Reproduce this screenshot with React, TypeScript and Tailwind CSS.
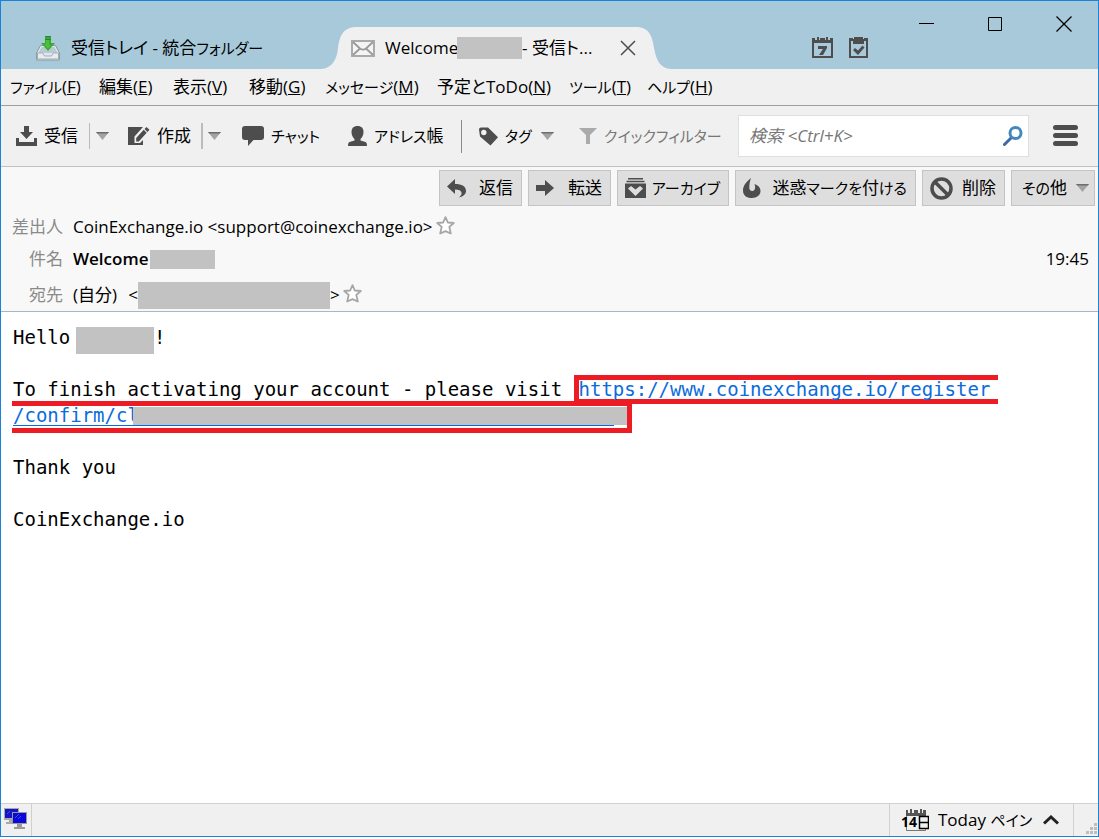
import { ReactNode } from "react";
import clsx from "clsx";

const MENUS = [
  { kana: "ファイル", accessKey: "F", width: "w-[89px]" },
  { label: "編集", accessKey: "E", width: "w-[74px]" },
  { label: "表示", accessKey: "V", width: "w-[76px]" },
  { label: "移動", accessKey: "G", width: "w-[76px]" },
  { kana: "メッセージ", accessKey: "M", width: "w-[112px]" },
  { label: "予定とToDo", accessKey: "N", width: "w-[132px]" },
  { kana: "ツール", accessKey: "T", width: "w-[78px]" },
  { kana: "ヘルプ", accessKey: "H", width: "w-[78px]" },
];

// Kana is set a little smaller than kanji, as in the compact system UI fonts.
function Kana({ children }: { children: ReactNode }) {
  return <span className="text-[15px]">{children}</span>;
}

function Redacted({ className }: { className: string }) {
  return <span className={clsx("shrink-0 bg-[#c2c2c2]", className)} />;
}

function Caret() {
  return (
    <svg width="13" height="8" viewBox="0 0 13 8" className="shrink-0" aria-hidden="true">
      <path d="M0 0h13L6.5 8z" fill="#a3a3a3" />
      <path d="M0 0h13l-1.2 1.5H1.2z" fill="#6d6d6d" />
    </svg>
  );
}

function InboxIcon() {
  return (
    <svg width="24" height="25" viewBox="0 0 24 25" className="shrink-0" aria-hidden="true">
      <path d="M4.5 9.5h15L23.5 17v7H.5v-7z" fill="#dde7ec" stroke="#8e9aa1" />
      <path d="M5.500 11h13l3 6H2.500z" fill="#b9cad4" />
      <path d="M1.500 17h5l2 3h7l2-3h5v6h-21z" fill="#e6ecef" stroke="#a3afb6" />
      <path d="M9 0h6v7h4l-7 8-7-8h4z" fill="#36ad32" />
      <path d="M10 4h3v5h2l-3 4-4-5h2z" fill="#4fbd45" />
      <path d="M9 .5h6M9 3.500h6" stroke="#278a28" />
    </svg>
  );
}

function EnvelopeIcon() {
  return (
    <svg width="24" height="17" viewBox="0 0 24 17" fill="none" className="shrink-0" aria-hidden="true">
      <rect x="1" y="1" width="22" height="15" fill="#f4f4f4" stroke="#aaa" strokeWidth="2" />
      <path d="M2 2l7 6.500c2 1.500 4 1.500 6 0L22 2M2 15l7-6.500M22 15l-7-6.500" stroke="#999" strokeWidth="1.800" />
    </svg>
  );
}

function CalendarIcon() {
  return (
    <svg width="21" height="21" viewBox="0 0 21 21" aria-hidden="true">
      <path d="M0 1h3v2h2V0h2v3h1V1h5v2h1V0h2v3h2V1h3v20H0z" fill="#4d4d4d" />
      <path d="M2 6h17v13H2z" fill="#a7c9da" />
      <path d="M6 9h9v2l-4 7H7l4-6H6z" fill="#4d4d4d" />
    </svg>
  );
}

function TasksIcon() {
  return (
    <svg width="19" height="21" viewBox="0 0 19 21" aria-hidden="true">
      <path d="M0 1h4v1h1V0h9v2h1V1h4v20H0z" fill="#4d4d4d" />
      <path d="M2 4h2v3h11V4h2v15H2z" fill="#a7c9da" />
      <path d="M5 0h9v6H5z" fill="#4d4d4d" />
      <path d="M4 13l2-2 3 2.500 4.500-5 2 2-6.500 7.500z" fill="#4d4d4d" />
    </svg>
  );
}

function ReceiveIcon() {
  return (
    <svg width="21" height="20" viewBox="0 0 21 20" fill="#4d4d4d" className="shrink-0" aria-hidden="true">
      <path d="M8 0h5v6h4l-6.500 7L4 6h4zM0 12h3v4h15v-4h3v8H0z" />
    </svg>
  );
}

function ComposeIcon() {
  return (
    <svg width="22" height="20" viewBox="0 0 22 20" fill="#4d4d4d" className="shrink-0" aria-hidden="true">
      <path d="M0 1h15L6.500 10.500V17H12l3-3v5H0z" />
      <path d="M18.500 1l3 2.800-2 2.100-3-2.900zM15.700 3.800l3 2.900-7.900 8.800H8.200V12z" />
    </svg>
  );
}

function ChatIcon() {
  return (
    <svg width="22" height="20" viewBox="0 0 22 20" fill="#4d4d4d" className="shrink-0" aria-hidden="true">
      <path d="M3 0h16a3 3 0 013 3v8a3 3 0 01-3 3h-7.500L6 20v-6H3a3 3 0 01-3-3V3a3 3 0 013-3z" />
    </svg>
  );
}

function PersonIcon() {
  return (
    <svg width="19" height="20" viewBox="0 0 19 20" fill="#4d4d4d" className="shrink-0" aria-hidden="true">
      <path d="M9.500 0c4 0 6 2.200 6 6 0 3-1.300 5.500-3 7v1.500l5 1.500c1 .4 1.500 1.500 1.500 4H0c0-2.500.5-3.600 1.500-4l5-1.500V13c-1.700-1.500-3-4-3-7 0-3.800 2-6 6-6z" />
    </svg>
  );
}

function TagIcon() {
  return (
    <svg width="19" height="19" viewBox="0 0 19 19" className="shrink-0" aria-hidden="true">
      <path
        d="M0 2.500A2 2 0 012 .5h7l10 9.800-7.500 8.200L1 9.500zM4.800 2.800a2.700 2.700 0 100 5.400 2.700 2.700 0 000-5.400z"
        fill="#4d4d4d"
        fillRule="evenodd"
      />
    </svg>
  );
}

function FunnelIcon() {
  return (
    <svg width="18" height="16" viewBox="0 0 18 16" className="shrink-0" aria-hidden="true">
      <path d="M0 0h18l-7 7v9H7V7z" fill="#aaa" />
    </svg>
  );
}

function SearchIcon() {
  return (
    <svg width="20" height="20" viewBox="0 0 20 20" fill="none" className="shrink-0" aria-hidden="true">
      <path d="M1.500 18.500L8 12" stroke="#3d6aa3" strokeWidth="3" strokeLinecap="round" />
      <circle cx="12.500" cy="7" r="5.500" stroke="#4387bd" strokeWidth="3" />
    </svg>
  );
}

function ReplyIcon() {
  return (
    <svg width="20" height="19" viewBox="0 0 20 19" fill="#4d4d4d" className="shrink-0" aria-hidden="true">
      <path d="M0 7.500L8 0v5c7 0 11 2.500 11 7 0 3-2.500 5.500-7 6.500 2.300-2 2.800-3.500 2.500-5C14 11.500 12 10.500 8 10.500V15z" />
    </svg>
  );
}

function ForwardIcon() {
  return (
    <svg width="19" height="16" viewBox="0 0 19 16" fill="#4d4d4d" className="shrink-0" aria-hidden="true">
      <path d="M0 5h9V0l9 8-9 8v-5H0z" />
    </svg>
  );
}

function ArchiveIcon() {
  return (
    <svg width="21" height="20" viewBox="0 0 21 20" className="shrink-0" aria-hidden="true">
      <path d="M3 0h15v1.500H3zM1.500 2.700h18v1.500h-18zM0 5.500h21V20H0z" fill="#4d4d4d" />
      <path d="M3 10.500L6 8l4.500 3.500L15 8l3 2.500-7.500 7.500z" fill="#dedede" />
    </svg>
  );
}

function JunkIcon() {
  return (
    <svg width="18" height="21" viewBox="0 0 18 21" fill="#4d4d4d" className="shrink-0" aria-hidden="true">
      <path d="M8 0C6.500 4 6.500 6 6.300 9c-.2 2.500 1 4 3 4s3.900-2.200 2.200-7c4 1.200 6 4 6 7 0 4-3.500 7-8.700 7S0 17.500 0 12.500C0 8 3 4 8 0z" />
    </svg>
  );
}

function DeleteIcon() {
  return (
    <svg width="23" height="23" viewBox="0 0 23 23" fill="none" stroke="#4d4d4d" strokeWidth="3.500" className="shrink-0" aria-hidden="true">
      <circle cx="11.500" cy="11.500" r="9.500" />
      <path d="M5 5l13 13" />
    </svg>
  );
}

function StarButton() {
  return (
    <button type="button" aria-label="スターを付ける" className="pb-1">
      <svg width="19" height="19" viewBox="0 0 19 19" aria-hidden="true">
        <path
          d="M9.500 1.200l2.300 5.300 6 .5-4.500 3.900 1.500 6.600-5.300-2.400-5.300 2.400 1.500-6.600L1.200 7l6-.5z"
          fill="#fff"
          stroke="#a6a6a6"
          strokeWidth="1.800"
          strokeLinejoin="round"
        />
      </svg>
    </button>
  );
}

function NetworkIcon() {
  return (
    <svg width="24" height="22" viewBox="0 0 24 22" aria-hidden="true">
      <path d="M0 0h15v12H0zM5 12h5v2h2v2H2v-2h3z" fill="#a8a8a8" />
      <path d="M1 1h13v9H1z" fill="#1515c8" />
      <path d="M8 4h15v12H8zM13 16h5v3h3v2H10v-2h3z" fill="#999" />
      <path d="M9 5h13v10H9z" fill="#0808dc" />
      <path d="M3 6l3-3M11 10l4-4M14 11l3-3" stroke="#4353d8" />
    </svg>
  );
}

function TodayIcon() {
  return (
    <span className="relative h-[22px] w-7 shrink-0">
      <svg width="28" height="22" viewBox="0 0 28 22" fill="none" aria-hidden="true">
        <path d="M5 1h2v3h2V0h2v4h2V1h4v3h2V0h2v4h1V1h3v6H5z" fill="#555" />
        <path d="M5.500 7v14.500h19V7" stroke="#777" />
        <path d="M18.500 7.500h9v12h-9zM18.500 13.500h9" fill="#f0f0f0" stroke="#000" strokeWidth="1.500" />
      </svg>
      <span className="absolute left-0 top-1 text-[14px] font-bold leading-[18px]">14</span>
    </span>
  );
}

function ToolButton({ icon, label, className }: { icon: ReactNode; label: ReactNode; className: string }) {
  return (
    <button type="button" className={clsx("flex h-10 shrink-0 items-center gap-[7px] whitespace-nowrap", className)}>
      {icon}
      <span>{label}</span>
    </button>
  );
}

function MailButton({ icon, label, className }: { icon: ReactNode; label: ReactNode; className: string }) {
  return (
    <button
      type="button"
      className={clsx(
        "flex h-9 shrink-0 items-center justify-between whitespace-nowrap border border-[#c4c4c4] bg-[#dedede] pl-[7px] pr-2",
        className,
      )}
    >
      {icon}
      <span>{label}</span>
    </button>
  );
}

function TitleBar() {
  return (
    <header className="flex h-[68px] shrink-0 items-end bg-[#a7c9da]">
      <nav aria-label="タブ" className="flex items-end">
        <button type="button" className="flex h-[42px] w-[320px] items-center gap-[11px] whitespace-nowrap pl-[35px]">
          <InboxIcon />
          <span>
            受信トレイ - 統合<Kana>フォルダー</Kana>
          </span>
        </button>
        <button type="button" className="relative flex h-[42px] w-[350px] items-center pl-[30px] pr-[35px]">
          <svg className="absolute inset-0 h-full w-full" viewBox="0 0 350 42" preserveAspectRatio="none" aria-hidden="true">
            <path d="M0 42C13 41 16 30 17 21C19 8 22 0 37 0H314C328 0 331 8 333 21C335 30 337 41 350 42z" fill="#f0f0f0" />
          </svg>
          <span className="relative flex w-full items-center whitespace-nowrap">
            <EnvelopeIcon />
            <span className="ml-[10px] w-[72px]">Welcome</span>
            <Redacted className="h-[22px] w-[65px]" />
            <span className="flex-1 text-left">- 受信ト...</span>
            <svg width="16" height="16" viewBox="0 0 16 16" stroke="#4d4d4d" strokeWidth="1.500" aria-hidden="true">
              <path d="M1 1l14 14M15 1L1 15" />
            </svg>
          </span>
        </button>
      </nav>
      <div className="ml-[141px] flex gap-4 pb-[11px]">
        <button type="button" aria-label="カレンダー"><CalendarIcon /></button>
        <button type="button" aria-label="ToDo"><TasksIcon /></button>
      </div>
      <div className="ml-auto flex gap-[54px] self-start pr-[26px] pt-[15px]">
        <button type="button" aria-label="最小化">
          <svg width="15" height="16" viewBox="0 0 15 16" stroke="#000"><path d="M0 7.500h15" /></svg>
        </button>
        <button type="button" aria-label="最大化">
          <svg width="14" height="16" viewBox="0 0 14 16" fill="none" stroke="#000"><path d="M.5 1.500h13v13H.5z" /></svg>
        </button>
        <button type="button" aria-label="閉じる">
          <svg width="16" height="16" viewBox="0 0 16 16" stroke="#000" strokeWidth="1.300"><path d="M.5.5l15 15M15.500.5l-15 15" /></svg>
        </button>
      </div>
    </header>
  );
}

function Toolbar() {
  return (
    <div className="flex h-[61px] shrink-0 items-center border-b border-[#c1c1c1] pl-[15px] pr-5">
      <ToolButton icon={<ReceiveIcon />} label="受信" className="w-[73px]" />
      <button type="button" aria-label="受信メニュー" className="flex h-[26px] w-[39px] shrink-0 items-center border-l border-[#bbb] pl-[6px]">
        <Caret />
      </button>
      <ToolButton icon={<ComposeIcon />} label="作成" className="w-[73px]" />
      <button type="button" aria-label="作成メニュー" className="flex h-[26px] w-[41px] shrink-0 items-center border-l-2 border-[#bbb] pl-[5px]">
        <Caret />
      </button>
      <ToolButton icon={<ChatIcon />} label={<Kana>チャット</Kana>} className="w-[106px]" />
      <ToolButton icon={<PersonIcon />} label={<><Kana>アドレス</Kana>帳</>} className="w-[113px]" />
      <span className="h-[33px] w-[18px] shrink-0 border-l border-[#8c8c8c]" />
      <button type="button" className="flex h-10 w-[100px] shrink-0 items-center gap-[7px] whitespace-nowrap">
        <TagIcon />
        <span className="w-[29px] text-left"><Kana>タグ</Kana></span>
        <Caret />
      </button>
      <ToolButton icon={<FunnelIcon />} label={<Kana>クイックフィルター</Kana>} className="w-[159px] text-[#777]" />
      <label className="flex h-[42px] min-w-0 flex-1 items-center border border-[#dfdfdf] bg-white pl-[10px] pr-[5px]">
        <input
          type="search"
          aria-label="検索"
          placeholder="検索 <Ctrl+K>"
          className="min-w-0 flex-1 bg-transparent outline-none placeholder:italic placeholder:text-[#767676]"
        />
        <SearchIcon />
      </label>
      <button type="button" aria-label="メニュー" className="ml-6 flex w-[25px] flex-col gap-[3px] pb-[2px]">
        <span className="h-[5px] rounded-sm bg-[#4d4d4d]" />
        <span className="h-[5px] rounded-sm bg-[#4d4d4d]" />
        <span className="h-[5px] rounded-sm bg-[#4d4d4d]" />
      </button>
    </div>
  );
}

function MessageHeader() {
  return (
    <section className="shrink-0 border-b border-[#a9b5cc] bg-[#f8f8f8] pt-[3px]">
      <div className="flex justify-end gap-[6px] pr-[3px]">
        <MailButton icon={<ReplyIcon />} label="返信" className="w-[83px]" />
        <MailButton icon={<ForwardIcon />} label="転送" className="w-[83px]" />
        <MailButton icon={<ArchiveIcon />} label={<Kana>アーカイブ</Kana>} className="w-[112px]" />
        <MailButton icon={<JunkIcon />} label={<>迷惑<Kana>マークを</Kana>付<Kana>ける</Kana></>} className="w-[181px]" />
        <MailButton icon={<DeleteIcon />} label="削除" className="w-[83px]" />
        <button
          type="button"
          className="flex h-9 w-[84px] shrink-0 items-center justify-between whitespace-nowrap border border-[#c4c4c4] bg-[#dedede] pl-[10px] pr-[5px]"
        >
          <span><Kana>その</Kana>他</span>
          <Caret />
        </button>
      </div>
      <dl className="grid grid-cols-[62px_1fr] grid-rows-[32px_32px_36px] items-center gap-x-[10px] pt-[5px] text-black">
        <dt className="text-right text-[#8a8a8a]">差出人</dt>
        <dd className="flex items-center gap-[3px] whitespace-nowrap">
          CoinExchange.io &lt;support@coinexchange.io&gt;
          <StarButton />
        </dd>
        <dt className="text-right text-[#8a8a8a]">件名</dt>
        <dd className="flex items-center pr-[9px]">
          <span className="w-[77px] font-semibold">Welcome</span>
          <Redacted className="h-[19px] w-[65px]" />
          <time className="ml-auto">19:45</time>
        </dd>
        <dt className="pt-1 text-right text-[#8a8a8a]">宛先</dt>
        <dd className="flex items-center whitespace-nowrap pt-1">
          <span className="flex w-[65px] justify-between">
            <span>(自分)</span>
            <span>&lt;</span>
          </span>
          <Redacted className="h-[27px] w-[192px]" />
          <span className="mr-[3px]">&gt;</span>
          <StarButton />
        </dd>
      </dl>
    </section>
  );
}

function MessageBody() {
  return (
    <main className="min-h-0 flex-1 overflow-hidden bg-white pl-3 pt-3 font-['DejaVu_Sans_Mono',monospace] text-[19px] leading-[26px]">
      <p className="flex h-[52px] items-start">
        <span className="w-[63px]">Hello</span>
        <Redacted className="mt-[3px] h-[27px] w-[78px]" />
        !
      </p>
      <p className="flex h-[26px] items-start whitespace-pre">
        {"To finish activating your account - please visit "}
        <a
          href="#register"
          className="-mt-px h-[29px] w-[424px] border-y-[5px] border-l-[5px] border-[#ed1c24] leading-[19px] text-[#0a6cdc]"
        >
          https://www.coinexchange.io/register
        </a>
      </p>
      <p className="mb-[27px] h-[26px]">
        <a
          href="#confirm"
          className="-ml-px -mt-px flex h-8 w-[620px] border-y-[5px] border-r-[5px] border-[#ed1c24] pl-px text-[#0a6cdc]"
        >
          <span className="flex h-5 w-[601px] items-end border-b border-[#0a6cdc]">
            <span className="w-[120px] shrink-0 leading-[20px]">/confirm/cl</span>
            <Redacted className="h-[18px] w-[494px]" />
          </span>
        </a>
      </p>
      <p className="mb-[26px]">Thank you</p>
      <p>CoinExchange.io</p>
    </main>
  );
}

function StatusBar() {
  return (
    <footer className="flex h-[33px] shrink-0 items-stretch border-t border-[#d0d0d0]">
      <div className="flex w-[31px] items-center border-r border-[#d0d0d0] pb-[3px] pl-[3px]">
        <NetworkIcon />
      </div>
      <button type="button" className="ml-auto flex w-[185px] items-center gap-[9px] whitespace-nowrap border-x border-[#d0d0d0] pl-[11px] pr-[14px]">
        <TodayIcon />
        <span>Today <Kana>ペイン</Kana></span>
        <svg width="16" height="10" viewBox="0 0 16 10" fill="none" stroke="#222" strokeWidth="3" className="ml-auto shrink-0" aria-hidden="true">
          <path d="M1 8.500l7-6.500 7 6.500" />
        </svg>
      </button>
      <div className="flex w-6 items-end justify-end pb-[2px] pr-px">
        <svg width="11" height="11" viewBox="0 0 11 11" fill="#bdbdbd" aria-hidden="true">
          <path d="M8 0h3v3H8zM4 4h3v3H4zM8 4h3v3H8zM0 8h3v3H0zM4 8h3v3H4zM8 8h3v3H8z" />
        </svg>
      </div>
    </footer>
  );
}

export default function App() {
  return (
    <div className="h-screen bg-white pb-[2px]">
      <div className="flex h-full flex-col border border-[#1883d7] bg-[#f0f0f0] font-['Open_Sans','Noto_Sans_CJK_JP',sans-serif] text-[17px] leading-6 text-black [font-feature-settings:'palt']">
        <TitleBar />
        <nav aria-label="メニューバー" className="flex h-[37px] shrink-0 items-center border-b border-[#9f9f9f] pl-[9px]">
          {MENUS.map((menu) => (
            <button key={menu.accessKey} type="button" className={clsx("shrink-0 whitespace-nowrap text-left", menu.width)}>
              {menu.kana ? <Kana>{menu.kana}</Kana> : menu.label}(<u>{menu.accessKey}</u>)
            </button>
          ))}
        </nav>
        <Toolbar />
        <MessageHeader />
        <MessageBody />
        <StatusBar />
      </div>
    </div>
  );
}
